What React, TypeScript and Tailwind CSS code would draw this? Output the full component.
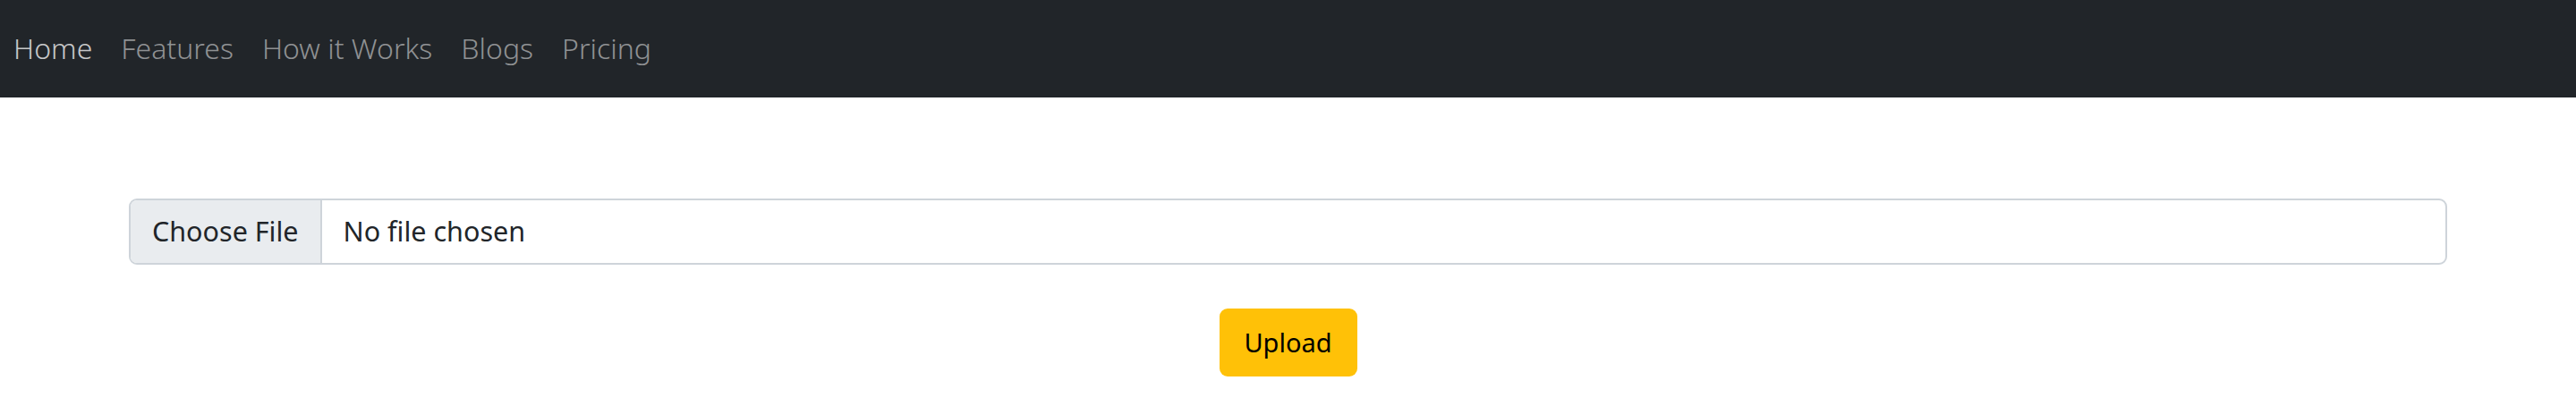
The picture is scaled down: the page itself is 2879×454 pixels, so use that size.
export default function App() {
  const links = ['Home', 'Features', 'How it Works', 'Blogs', 'Pricing']

  return (
    <div className="min-h-screen bg-white" style={{ fontFamily: '"Noto Sans", "Open Sans", sans-serif' }}>
      {/* Navbar */}
      <nav className="h-[109px] bg-[#212529] flex items-center px-[15px]">
        <ul className="flex items-center gap-[32px]">
          {links.map((l, i) => (
            <li key={l}>
              <a
                href="#"
                className={`text-[32px] font-light leading-none ${i === 0 ? 'text-[#c6c7c8]' : 'text-[#8f9193]'}`}
              >
                {l}
              </a>
            </li>
          ))}
        </ul>
      </nav>

      {/* Upload form */}
      <div className="px-[144px] pt-[113px]">
        <div className="flex h-[74px] border-[2px] border-[#ced4da] rounded-[9px] overflow-hidden">
          <div className="flex items-center px-[24px] bg-[#e9ecef] border-r-[2px] border-[#ced4da] text-[30.5px] text-[#212529]">
            Choose File
          </div>
          <div className="flex items-center px-[24px] text-[30.5px] text-[#212529]">No file chosen</div>
        </div>
        <div className="flex justify-center mt-[49px]">
          <button className="h-[76px] w-[154px] rounded-[9px] bg-[#ffc107] text-[29px] text-black">
            Upload
          </button>
        </div>
      </div>
    </div>
  )
}
